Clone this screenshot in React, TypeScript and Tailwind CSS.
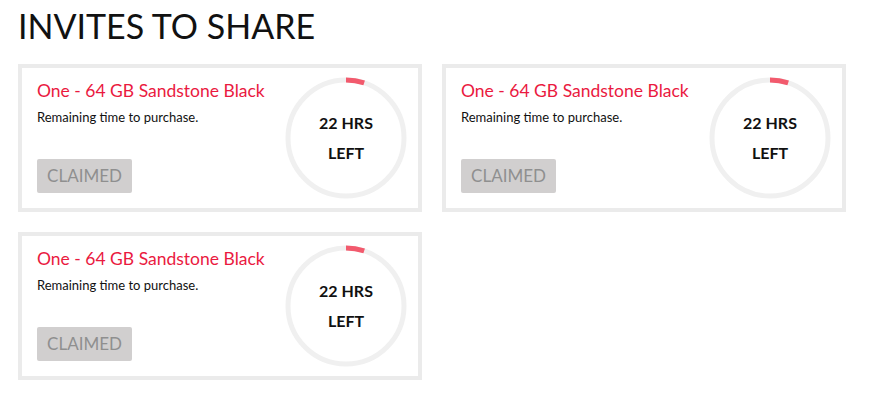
import React from "react";

function Ring() {
  const r = 58;
  const c = 2 * Math.PI * r;
  const arc = 18.5;
  return (
    <svg width="122" height="122" viewBox="0 0 122 122" className="block">
      <circle cx="61" cy="61" r={r} fill="none" stroke="#f0f0f0" strokeWidth="5" />
      <circle
        cx="61"
        cy="61"
        r={r}
        fill="none"
        stroke="#f25a6d"
        strokeWidth="5"
        strokeDasharray={`${arc} ${c}`}
        transform="rotate(-90 61 61)"
      />
    </svg>
  );
}

function Card() {
  return (
    <div className="flex h-[148px] w-[404px] justify-between border-4 border-[#ebebeb] bg-white">
      <div className="flex flex-col pl-[15px] pt-[11px]">
        <div className="text-[17.5px] leading-[24px] text-[#ea1a3f]">One - 64 GB Sandstone Black</div>
        <div className="mt-[6px] text-[13px] leading-[16px] text-[#111]">Remaining time to purchase.</div>
        <div className="mt-[34px] flex h-[34px] w-[95px] items-center justify-center rounded-[2px] bg-[#d1cfcf] text-[17px] text-[#8f8f8f]">
          CLAIMED
        </div>
      </div>
      <div className="relative mr-[11px] mt-[9px] h-[122px] w-[122px]">
        <Ring />
        <div className="absolute inset-0 flex flex-col items-center justify-center text-[16px] font-bold leading-[30px] text-[#111]">
          <div>22 HRS</div>
          <div>LEFT</div>
        </div>
      </div>
    </div>
  );
}

export default function App() {
  return (
    <div className="min-h-[401px] w-[874px] bg-white pl-[18px] pt-[6px]" style={{ fontFamily: "Lato, 'Open Sans', sans-serif" }}>
      <h1 className="text-[34px] font-normal leading-[40px] text-[#111]">INVITES TO SHARE</h1>
      <div className="mt-[18px] grid grid-cols-[404px_404px] gap-5">
        <Card />
        <Card />
        <Card />
      </div>
    </div>
  );
}
